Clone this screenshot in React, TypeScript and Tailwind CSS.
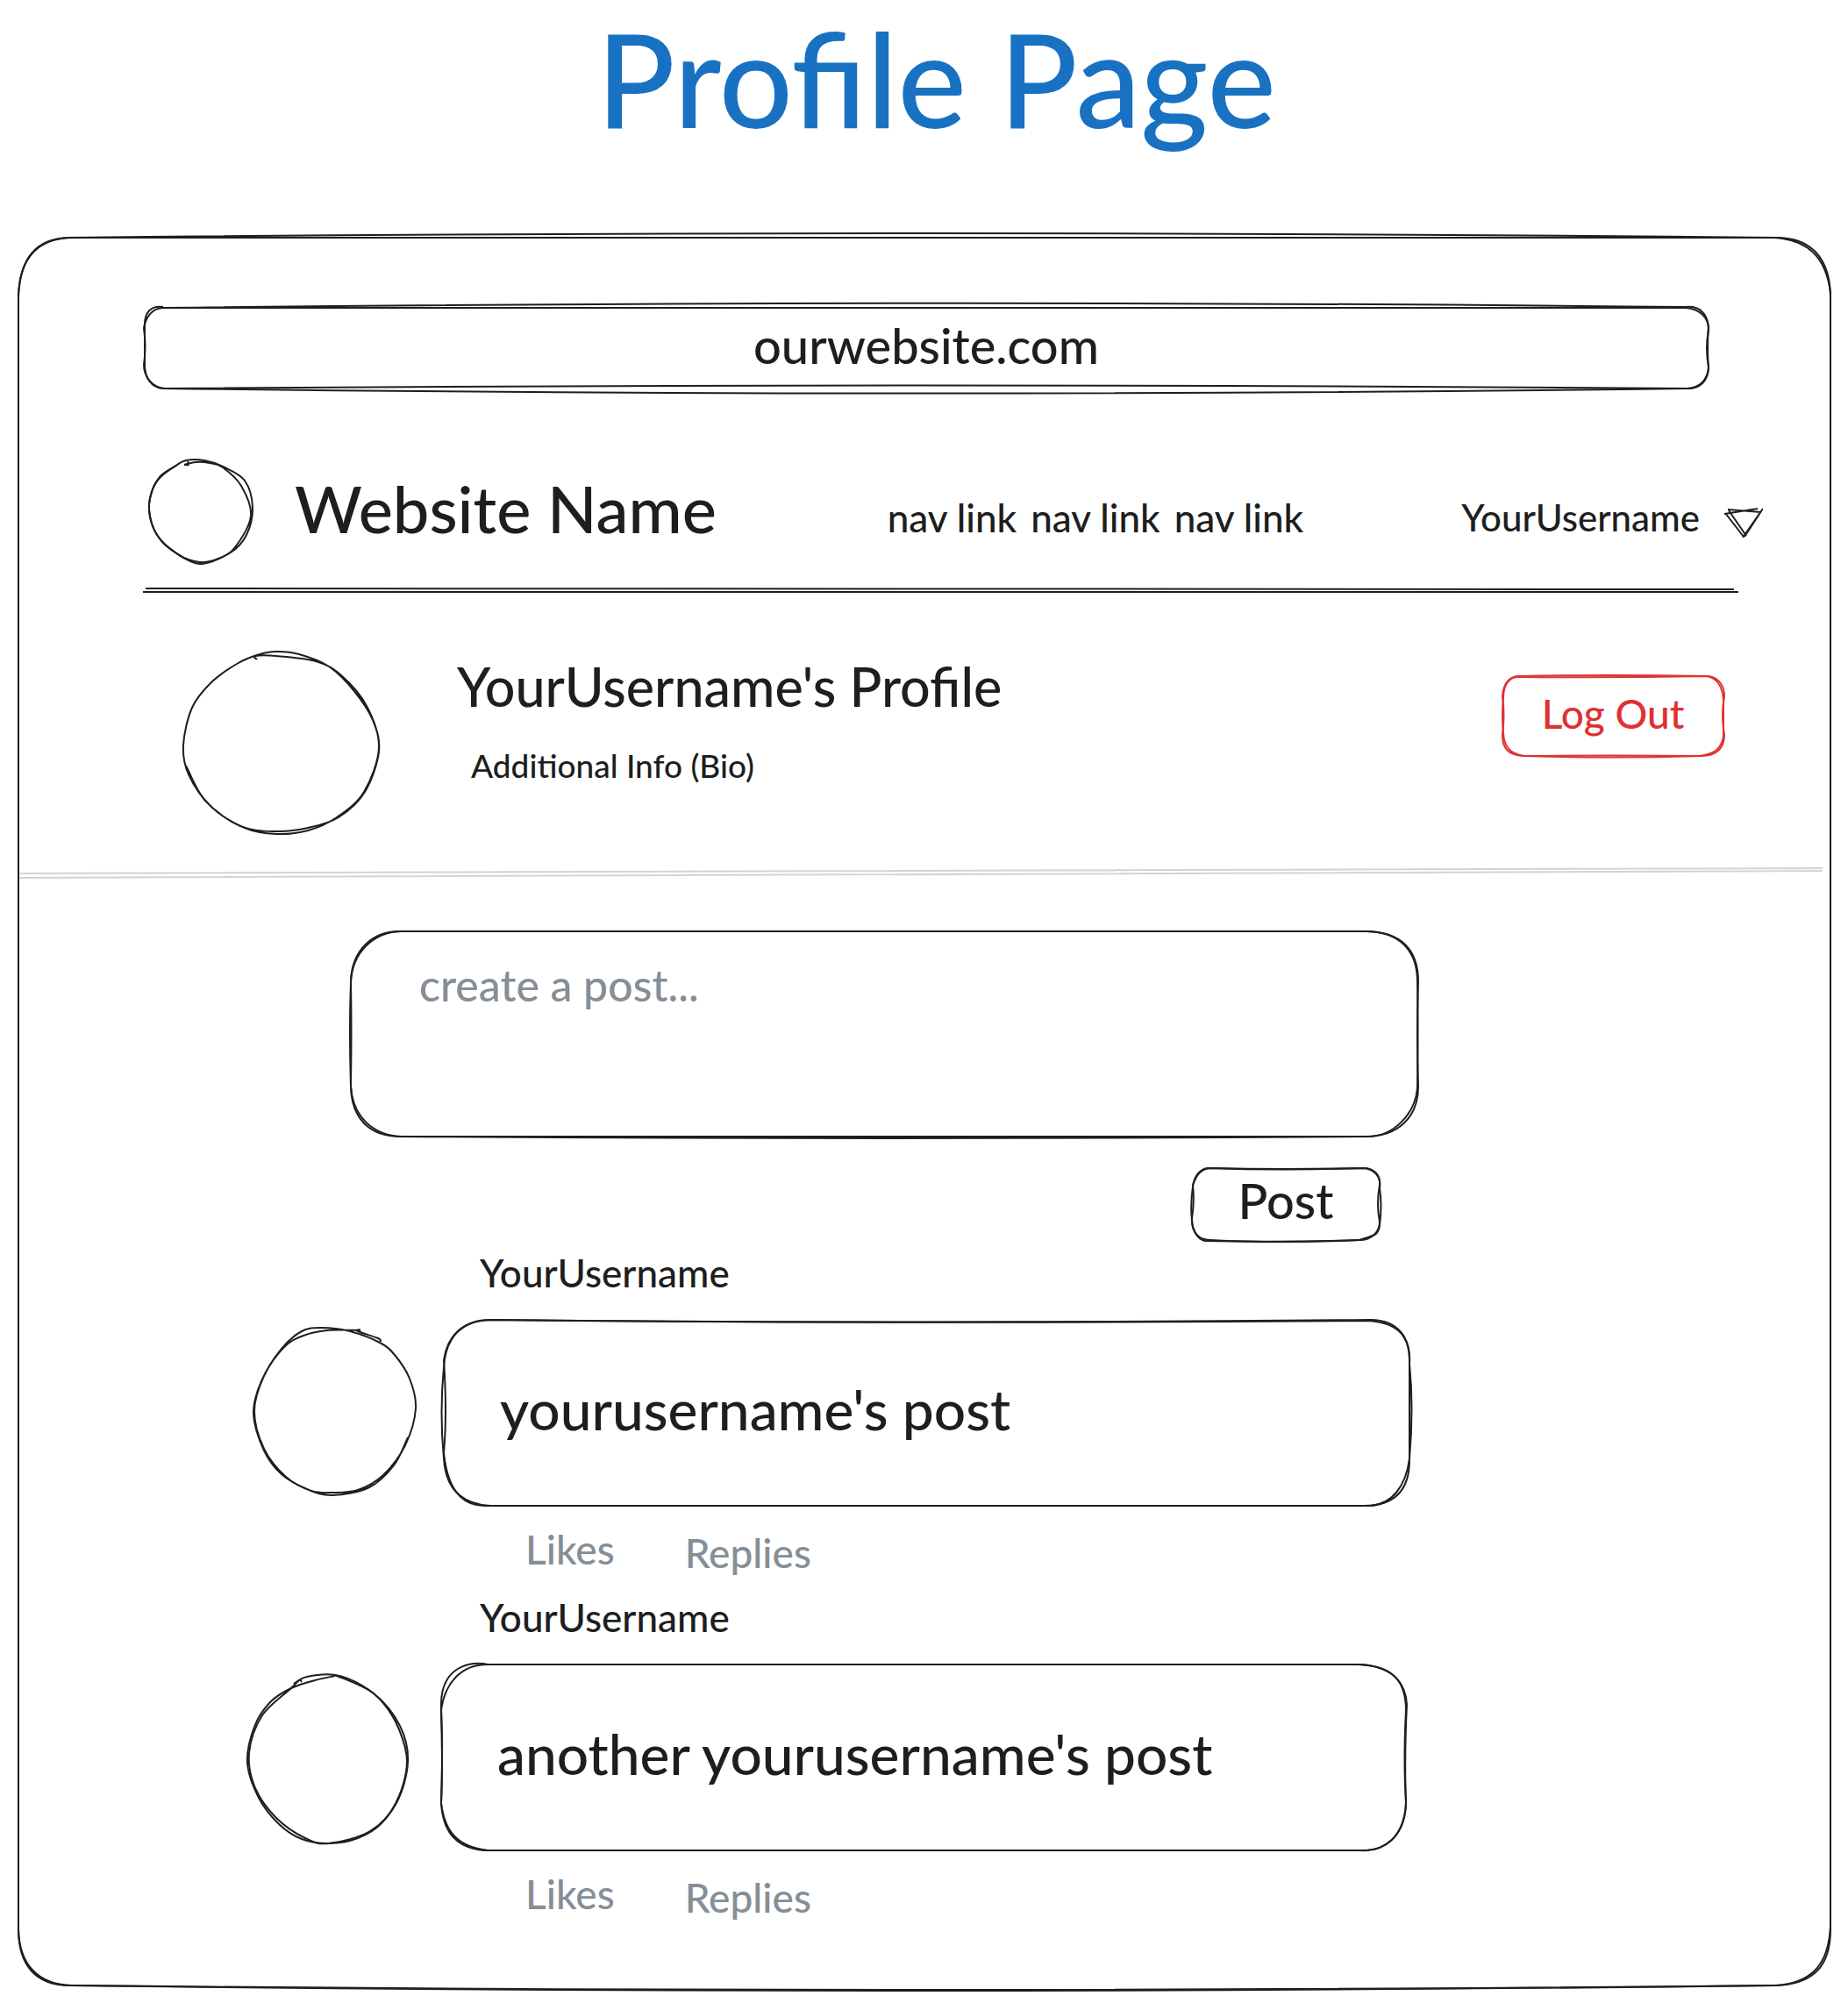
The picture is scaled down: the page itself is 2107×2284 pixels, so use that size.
import type { ReactNode } from "react";

type Point = [number, number];

/** Turns a list of points into one smooth pen stroke. */
function stroke(points: Point[]): string {
  let d = `M${points[0][0]} ${points[0][1]}`;
  for (let i = 0; i < points.length - 1; i++) {
    const p0 = points[Math.max(i - 1, 0)];
    const p1 = points[i];
    const p2 = points[i + 1];
    const p3 = points[Math.min(i + 2, points.length - 1)];
    d += ` C${p1[0] + (p2[0] - p0[0]) / 6} ${p1[1] + (p2[1] - p0[1]) / 6} ${p2[0] - (p3[0] - p1[0]) / 6} ${p2[1] - (p3[1] - p1[1]) / 6} ${p2[0]} ${p2[1]}`;
  }
  return d;
}

/** Hand-drawn outline that fills its (relative) parent. */
function Outline({ w, h, paths }: { w: number; h: number; paths: string[] }) {
  return (
    <svg
      aria-hidden="true"
      viewBox={`0 0 ${w} ${h}`}
      preserveAspectRatio="none"
      className="pointer-events-none absolute inset-0 size-full overflow-visible"
      fill="none"
      stroke="currentColor"
      strokeWidth="2"
    >
      {paths.map((d) => (
        <path key={d} d={d} vectorEffect="non-scaling-stroke" />
      ))}
    </svg>
  );
}

const FRAME = [
  "M64 1 H2006 C2046 1 2067 26 2067 70 V1930 C2067 1972 2048 1993 2003 1994 Q1030 2006 60 1994 C20 1994 1 1970 1 1930 V66 C3 22 24 1 64 1",
  "M58 1 Q1030 -9 2003 1 C2040 3 2062 22 2067 64 V1926 C2065 1970 2046 1992 2003 1994 Q1030 2004 62 1994 C22 1993 2 1969 1 1930 V70 C2 26 20 2 58 1",
];

const ADDRESS = [
  "M24 1 H1758 C1774 2 1784 12 1784 26 Q1780 48 1784 68 C1784 84 1774 94 1760 93 Q890 86 24 93 C10 92 0 80 0 66 Q3 46 0 24 C2 12 10 0 24 1",
  "M22 1 Q890 -9 1758 0 C1774 -2 1782 8 1784 22 Q1782 46 1784 70 C1782 84 1774 92 1760 93 Q890 104 22 93 C8 92 1 80 1 66 V24 C0 6 8 -2 22 0",
];

const COMPOSER = [
  "M56 1 H1158 C1198 1 1218 22 1218 58 Q1216 120 1218 178 C1218 214 1194 235 1158 235 Q610 239 58 235 C22 235 1 214 1 176 Q2 116 1 56 C3 24 24 1 56 1",
  "M58 1 H1160 C1196 2 1216 22 1217 56 Q1218 110 1217 180 C1214 210 1190 234 1162 235 H60 C24 234 3 210 1 178 Q-1 112 1 60 C2 26 26 2 58 1",
];

const POST_BUTTON = [
  "M20 1 Q106 4 196 1 C208 1 216 8 215 20 Q211 42 215 62 C215 74 206 83 192 83 Q100 87 22 83 C8 83 1 74 1 60 Q-1 44 2 22 C4 8 12 1 20 1",
  "M22 1 Q106 3 198 1 C210 3 217 12 215 24 Q218 44 215 66 C214 80 204 78 192 83 Q106 86 16 84 C6 82 0 68 1 58 Q4 40 2 20 C6 10 10 2 22 1",
];

const LOGOUT_BUTTON = [
  "M22 1 Q126 -1 236 1 C248 3 254 12 254 24 Q250 46 254 68 C254 84 244 92 228 92 Q126 95 24 92 C8 91 1 84 1 68 Q4 46 1 24 C2 8 10 0 22 1",
  "M20 2 Q126 3 234 1 C246 3 252 14 253 28 V70 C250 86 240 90 226 92 Q126 91 26 92 C10 90 3 82 2 66 Q0 46 2 26 C2 12 8 1 20 2",
];

const CARD_ONE = [
  "M53 0 Q540 5 1050 1 C1084 2 1100 16 1100 46 V160 C1100 194 1084 212 1048 212 H53 C20 210 2 192 0 158 Q-5 106 0 54 C2 20 20 1 53 0",
  "M53 0 Q540 5 1056 0 C1086 0 1102 20 1100 50 Q1105 100 1100 158 C1096 190 1080 210 1056 212 H48 C18 213 4 190 0 152 Q4 106 0 46 C4 18 22 0 53 0",
];

const CARD_TWO = [
  "M53 0 H1048 C1084 2 1100 18 1100 52 Q1097 110 1100 156 C1100 192 1080 213 1048 212 H53 C20 211 2 194 0 158 Q2 106 0 52 C4 22 22 0 53 0",
  "M53 0 C36 -4 -2 0 0 50 Q2 106 0 158 C4 190 18 208 53 212 H1048 C1076 214 1098 196 1100 158 Q1098 106 1101 46 C1100 24 1088 2 1046 0",
];

const LOGO = [
  stroke([
    [41, 6], [54, 3], [70, 4], [85, 9], [106, 30], [117, 64], [99, 100], [80, 113], [59, 117], [34, 108],
    [10, 86], [1, 57], [5, 34], [14, 20], [30, 8], [43, 1], [64, 1], [85, 8], [110, 24], [119, 55], [112, 86],
    [94, 106], [61, 119], [38, 111],
  ]),
  stroke([[45, 2], [46, 6], [41, 6]]),
  stroke([[38, 111], [16, 94], [3, 70], [2, 44], [13, 20], [32, 7]]),
];

const PROFILE_PICTURE = [
  stroke([
    [85, 9], [83, 5], [107, 5], [152, 11], [181, 27], [210, 62], [224, 109], [207, 160], [176, 189], [143, 204],
    [107, 208], [71, 201], [33, 177], [7, 140], [1, 107], [11, 64], [33, 35], [62, 14], [85, 4], [107, 0],
    [133, 3], [167, 17], [195, 44], [217, 78], [224, 114], [208, 160], [178, 189], [143, 201], [107, 205],
    [66, 199], [26, 170], [4, 130],
  ]),
];

const AVATAR_ONE = [
  stroke([
    [122, 3], [84, 3], [57, 9], [35, 22], [12, 55], [1, 95], [12, 138], [37, 170], [66, 186], [90, 188],
    [119, 185], [148, 168], [173, 134], [185, 92], [178, 58], [161, 31], [144, 17], [110, 4], [77, 0],
    [55, 4], [32, 24], [9, 61], [0, 98], [12, 140], [32, 167], [61, 184], [90, 191], [132, 182], [160, 157],
    [176, 125],
  ]),
  stroke([[145, 16], [142, 12], [119, 4], [122, 2]]),
];

const AVATAR_TWO = [
  stroke([
    [53, 10], [68, 2], [100, 0], [131, 12], [155, 32], [173, 62], [182, 98], [173, 138], [153, 169], [126, 186],
    [93, 192], [62, 187], [36, 170], [13, 140], [0, 100], [8, 59], [26, 31], [50, 15], [77, 6], [100, 1],
  ]),
  stroke([
    [100, 0], [144, 21], [174, 58], [183, 99], [170, 146], [140, 178], [93, 192], [66, 186], [33, 163], [9, 129],
    [2, 89], [17, 46], [50, 15], [59, 6], [62, 8],
  ]),
];

type Post = {
  author: string;
  text: string;
  avatar: ReactNode;
  card: string[];
  rowClass: string;
};

const POSTS: Post[] = [
  {
    author: "YourUsername",
    text: "yourusername's post",
    avatar: (
      <div className="relative mt-[9px] h-[191px] w-[185px] shrink-0">
        <Outline w={185} h={191} paths={AVATAR_ONE} />
      </div>
    ),
    card: CARD_ONE,
    rowClass: "gap-8 pl-[7px]",
  },
  {
    author: "YourUsername",
    text: "another yourusername's post",
    avatar: (
      <div className="relative mt-3 h-[193px] w-[183px] shrink-0">
        <Outline w={183} h={193} paths={AVATAR_TWO} />
      </div>
    ),
    card: CARD_TWO,
    rowClass: "gap-[38px] pr-1",
  },
];

function PostItem({ post }: { post: Post }) {
  return (
    <article>
      <h3 className="pl-[265px] text-[44px] leading-[52px]">{post.author}</h3>
      <div className={`mt-7 flex ${post.rowClass}`}>
        {post.avatar}
        <div className="relative flex min-h-[212px] flex-1 items-center pb-2 pl-16">
          <Outline w={1100} h={212} paths={post.card} />
          <p className="text-[64px] leading-[72px]">{post.text}</p>
        </div>
      </div>
      <div className="mt-6 flex items-start gap-20 pl-[317px] text-[46px] leading-[52px] text-[#868e96]">
        <button type="button">Likes</button>
        <button type="button" className="pt-1">
          Replies
        </button>
      </div>
    </article>
  );
}

export default function App() {
  return (
    <div className="min-h-screen bg-white px-5 pb-[19px] font-['Lato',sans-serif] font-medium text-[#1e1e1e]">
      <h1 className="pl-7 text-center text-[148px] leading-[178px] text-[#1971c2]">Profile Page</h1>

      <main className="relative mt-[92px] pt-20 pb-[75px]">
        <Outline w={2067} h={1995} paths={FRAME} />

        <div className="relative mr-[139px] ml-36 h-[94px]">
          <Outline w={1784} h={94} paths={ADDRESS} />
          <input
            type="text"
            aria-label="Address"
            defaultValue="ourwebsite.com"
            className="size-full bg-transparent pb-2 text-center text-[56px] outline-none"
          />
        </div>

        <header className="mt-20 mr-[77px] ml-[149px] flex h-[119px] items-center">
          <div className="relative size-[119px] shrink-0">
            <Outline w={119} h={119} paths={LOGO} />
          </div>
          <div className="ml-12 pb-2 text-[74px] leading-[80px]">Website Name</div>
          <nav className="ml-auto flex gap-4 pt-3 text-[44px] leading-[48px]">
            <a href="#one">nav link</a>
            <a href="#two">nav link</a>
            <a href="#three">nav link</a>
          </nav>
          <button type="button" className="ml-[180px] flex items-center gap-7 pt-3 text-[42px] leading-[48px]">
            YourUsername
            <svg aria-hidden="true" viewBox="0 0 44 34" className="mt-3 h-[34px] w-11" fill="none" stroke="currentColor" strokeWidth="2">
              <path d="M4 2 L42 5 M0 7 L38 1 M44 1 L21 34 M1 6 L22 33 M5 3 L25 32 M42 4 L23 33" />
            </svg>
          </button>
        </header>

        <svg
          aria-hidden="true"
          viewBox="0 0 1818 8"
          preserveAspectRatio="none"
          className="mt-[26px] ml-[143px] block h-2 w-[88%] overflow-visible"
          fill="none"
          stroke="#1e1e1e"
          strokeWidth="2"
        >
          <path d="M3 2 L1813 3 M0 6 L1818 6" />
        </svg>

        <section className="mt-[66px] mr-[121px] ml-[188px] flex min-h-[210px] items-start">
          <div className="relative h-[209px] w-[225px] shrink-0">
            <Outline w={225} h={209} paths={PROFILE_PICTURE} />
          </div>
          <div className="ml-[88px] pt-1">
            <h2 className="text-[61px] leading-[72px]">YourUsername's Profile</h2>
            <p className="mt-8 pl-4 text-[37px] leading-[44px]">Additional Info (Bio)</p>
          </div>
          <button type="button" className="relative mt-[27px] ml-auto h-[94px] w-[254px] pb-2 text-[46px] text-[#e03131]">
            <Outline w={254} h={94} paths={LOGOUT_BUTTON} />
            Log Out
          </button>
        </section>

        <svg
          aria-hidden="true"
          viewBox="0 0 2067 16"
          preserveAspectRatio="none"
          className="mt-9 block h-4 w-full overflow-visible"
          fill="none"
          stroke="#ced4da"
          strokeWidth="2"
        >
          <path d="M0 7 L2058 1 M0 12 L2058 4" />
        </svg>

        <form className="mt-14 mr-[470px] ml-[379px] flex flex-col" onSubmit={(e) => e.preventDefault()}>
          <div className="relative h-[236px]">
            <Outline w={1218} h={236} paths={COMPOSER} />
            <textarea
              aria-label="Create a post"
              placeholder="create a post..."
              className="block size-full resize-none bg-transparent px-[79px] pt-8 text-[50px] leading-[60px] outline-none placeholder:text-[#868e96]"
            />
          </div>
          <button type="submit" className="relative mt-[34px] mr-[43px] h-[84px] w-[216px] self-end pb-2 text-[56px] leading-[60px]">
            <Outline w={216} h={84} paths={POST_BUTTON} />
            Post
          </button>
        </form>

        <div className="mt-[10px] mr-[480px] ml-[262px] flex flex-col gap-[21px]">
          {POSTS.map((post) => (
            <PostItem key={post.text} post={post} />
          ))}
        </div>
      </main>
    </div>
  );
}
